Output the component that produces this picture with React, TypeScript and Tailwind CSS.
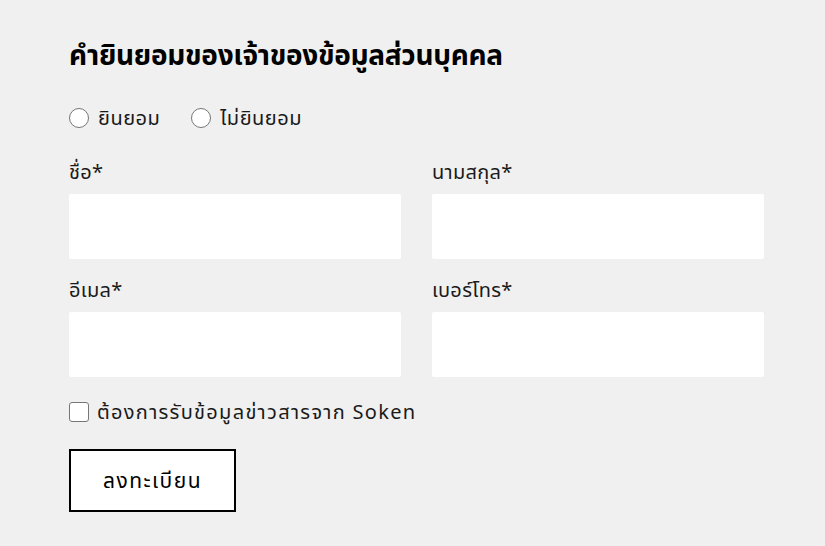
import React from "react";

export default function App() {
  const font = { fontFamily: '"Noto Sans", "Noto Sans Thai", "Noto Sans Thai Looped", sans-serif' };
  return (
    <div className="w-[825px] h-[546px] bg-[#f0f0f0] text-[#1a1a1a] overflow-hidden" style={font}>
      <div className="pl-[69px] pr-[61px] pt-[34px]">
        <h1 className="text-[28px] font-bold leading-[40px] text-black tracking-[-0.3px]">คำยินยอมของเจ้าของข้อมูลส่วนบุคคล</h1>
        <div className="mt-[31px] flex items-center h-[26px] text-[20px] tracking-[0.5px]">
          <label className="flex items-center">
            <span className="w-[20px] h-[20px] rounded-full border border-[#767676] bg-white" />
            <span className="ml-[9px]">ยินยอม</span>
          </label>
          <label className="flex items-center ml-[31px]">
            <span className="w-[20px] h-[20px] rounded-full border border-[#767676] bg-white" />
            <span className="ml-[9px]">ไม่ยินยอม</span>
          </label>
        </div>
        <div className="mt-[27px] grid grid-cols-2 gap-x-[31px] gap-y-[17px]">
          {["ชื่อ*", "นามสกุล*", "อีเมล*", "เบอร์โทร*"].map((l) => (
            <div key={l}>
              <div className="text-[20px] leading-[28px] h-[30px] tracking-[0.3px]">{l}</div>
              <div className="mt-[6px] h-[65px] bg-white rounded-[2px]" />
            </div>
          ))}
        </div>
        <div className="mt-[23px] flex items-center h-[24px] text-[20px] tracking-[1.3px]">
          <span className="w-[20px] h-[20px] rounded-[3px] border border-[#767676] bg-white" />
          <span className="ml-[8px]">ต้องการรับข้อมูลข่าวสารจาก Soken</span>
        </div>
        <button className="mt-[25px] w-[167px] h-[63px] border-2 border-black bg-white text-[21px] tracking-[1.5px] text-black">ลงทะเบียน</button>
      </div>
    </div>
  );
}
